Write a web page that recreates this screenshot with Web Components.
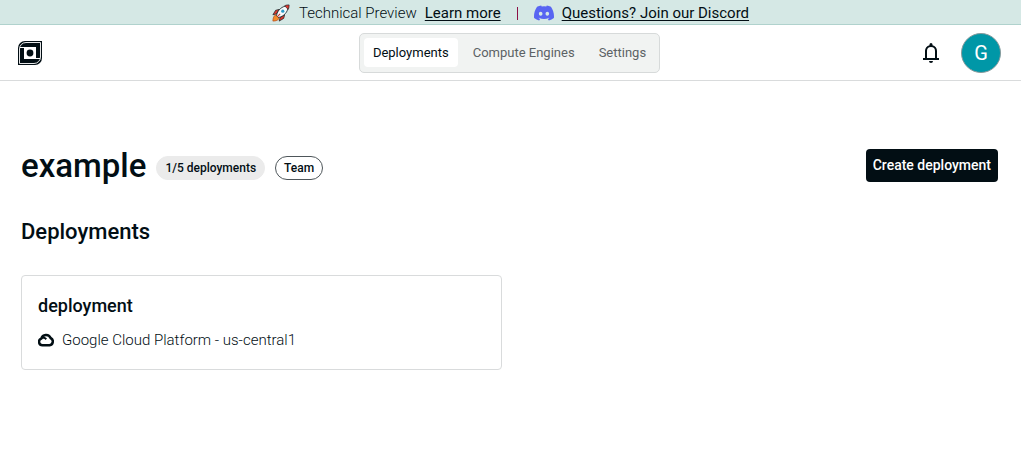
<!DOCTYPE html>
<html lang="en">
<head>
<meta charset="utf-8">
<title>Deployments</title>
<style>
  body { margin: 0; background: #fff; color: #020e14; font-family: Roboto, "Liberation Sans", sans-serif; }
</style>
</head>
<body>
<app-shell></app-shell>
<script>
function define(name, html) {
  const template = document.createElement('template');
  template.innerHTML = '<style>*{box-sizing:border-box}:host{box-sizing:border-box}</style>' + html;
  customElements.define(name, class extends HTMLElement {
    constructor() {
      super();
      this.attachShadow({ mode: 'open' }).append(template.content.cloneNode(true));
    }
  });
}

define('preview-banner', `
<style>
  :host { display: flex; justify-content: center; align-items: center; height: 25px; padding-top: 2px; background: #d5e8e5; border-bottom: 1px solid #b0d2cd; font-size: 15px; line-height: 22px; white-space: nowrap; }
  .rocket { width: 18px; height: 18px; margin-right: 9px; }
  .discord { width: 20px; height: 16px; margin-right: 8px; }
  a { color: inherit; text-decoration-thickness: 1px; text-underline-offset: 2px; }
  .text { font-weight: 300; margin-right: 8px; }
  .bar { width: 1px; height: 13px; background: #8c1046; margin: 0 16px; }
</style>
<svg class="rocket" viewBox="0 0 20 20" aria-hidden="true">
  <path d="M8 6 4 7 1 12 5 11Z" fill="#e0392f" stroke="#142126" stroke-width=".8"/>
  <path d="M14 12 13 16 8 19 9 15Z" fill="#e0392f" stroke="#142126" stroke-width=".8"/>
  <path d="M5 12C2 12 1 16 1 19 4 19 8 18 8 15Z" fill="#f58b28" stroke="#a94018" stroke-width=".7"/>
  <path d="M5 13C6 7 11 2 18 2 18 9 13 14 7 15Z" fill="#f7fbfc" stroke="#142126" stroke-width=".9"/>
  <path d="M14 2C16 1 17 1 19 1 19 3 19 4 18 6Z" fill="#e0392f" stroke="#142126" stroke-width=".7"/>
  <circle cx="12" cy="8" r="1.8" fill="#299bc9"/>
  <path d="m6 14 3-3" stroke="#c9302b" stroke-width="1.2"/>
</svg>
<span class="text">Technical Preview</span><a href="#preview">Learn more</a>
<span class="bar"></span>
<svg class="discord" viewBox="0 0 127.14 96.36" aria-hidden="true"><path fill="#5865f2" d="M107.7 8.07A105.15 105.15 0 0 0 81.47 0a72 72 0 0 0-3.36 6.83 97.68 97.68 0 0 0-29.11 0A72 72 0 0 0 45.64 0a106 106 0 0 0-26.25 8.09C2.79 32.65-1.71 56.6.54 80.21a105.7 105.7 0 0 0 32.17 16.15 77.7 77.7 0 0 0 6.89-11.11 68.4 68.4 0 0 1-10.85-5.18c.91-.66 1.8-1.34 2.66-2a75.57 75.57 0 0 0 64.32 0c.87.71 1.76 1.39 2.66 2a68.7 68.7 0 0 1-10.87 5.19 77 77 0 0 0 6.89 11.1 105.3 105.3 0 0 0 32.19-16.14c2.64-27.38-4.51-51.11-18.9-72.15ZM42.45 65.69C36.18 65.69 31 60 31 53s5-12.74 11.43-12.74S54 46 53.89 53s-5.05 12.69-11.44 12.69Zm42.24 0C78.41 65.69 73.25 60 73.25 53s5-12.74 11.44-12.74S96.23 46 96.12 53s-5.04 12.69-11.43 12.69Z"/></svg>
<a href="#discord">Questions? Join our Discord</a>`);

define('nav-tab', `
<style>
  :host { display: block; }
  a { display: block; height: 29px; padding: 0 9px; border-radius: 4px; font-size: 13px; line-height: 29px; color: #5c6265; text-decoration: none; white-space: nowrap; }
  :host([active]) a { background: #fff; color: #020e14; }
</style>
<a href="#tab"><slot></slot></a>`);

define('app-header', `
<style>
  :host { display: grid; grid-template-columns: 1fr auto 1fr; align-items: center; height: 56px; padding: 0 20px 0 18px; border-bottom: 1px solid #d9dbdc; }
  .logo { display: block; width: 24px; height: 24px; }
  nav { display: flex; gap: 6px; align-items: center; height: 40px; padding: 0 4px; background: #f1f3f2; border: 1px solid #d7dada; border-radius: 5px; }
  .actions { display: flex; justify-content: flex-end; align-items: center; gap: 18px; }
  button { display: grid; place-items: center; padding: 0; border: 0; background: none; color: inherit; font: inherit; }
  .avatar { width: 40px; height: 40px; border: 1px solid #879a9c; border-radius: 50%; background: #0097a7; color: #fff; font-size: 20px; }
</style>
<svg class="logo" viewBox="0 0 24 24" role="img" aria-label="Home">
  <path d="M7 0H24V17a7 7 0 0 1-7 7H0V7a7 7 0 0 1 7-7Z" fill="#020e14"/>
  <path d="M8 1.5H22.5V16a6.5 6.5 0 0 1-6.5 6.5H1.5V8a6.5 6.5 0 0 1 6.5-6.5Z" fill="none" stroke="#fff" stroke-width=".9"/>
  <path d="M2 6.5H7M17 17.5H22" stroke="#fff"/>
  <path d="M6 6h12v12H6z" fill="#fff"/><circle cx="12" cy="12" r="3.4" fill="#020e14"/>
</svg>
<nav><nav-tab active>Deployments</nav-tab><nav-tab>Compute Engines</nav-tab><nav-tab>Settings</nav-tab></nav>
<div class="actions">
  <button aria-label="Notifications"><svg width="24" height="24" viewBox="0 0 24 24"><path fill="#020e14" d="M4 19v-2h2v-7c0-1.38.42-2.61 1.25-3.69A5.9 5.9 0 0 1 10.5 4.2v-.7a1.5 1.5 0 0 1 3 0v.7a5.9 5.9 0 0 1 3.25 2.11A5.9 5.9 0 0 1 18 10v7h2v2H4Zm8 3a2 2 0 0 1-2-2h4a2 2 0 0 1-2 2Zm-4-5h8v-7a4 4 0 0 0-8 0v7Z"/></svg></button>
  <button class="avatar" aria-label="Account">G</button>
</div>`);

define('status-pill', `
<style>
  :host { display: block; height: 24px; padding: 0 8px; border: 1px solid #ebebeb; border-radius: 12px; background: #ebebeb; font-size: 12px; font-weight: 500; line-height: 23px; white-space: nowrap; }
  :host([outlined]) { background: #fff; border-color: #4e565a; }
</style>
<slot></slot>`);

define('deployment-card', `
<style>
  :host { display: block; padding: 17px 16px; border: 1px solid #d9dbdc; border-radius: 4px; }
  h3 { margin: 0; font-size: 18px; font-weight: 500; line-height: 26px; }
  p { display: flex; align-items: center; gap: 8px; margin: 9px 0 0; font-size: 15px; font-weight: 300; line-height: 24px; }
</style>
<h3><slot name="title"></slot></h3>
<p><svg width="16" height="16" viewBox="0 0 16 16" aria-hidden="true">
  <path d="M4.5 13.2a3.4 3.4 0 0 1-1.2-6.6A4.9 4.9 0 0 1 12.6 6a3.8 3.8 0 0 1-1 7.2Z" fill="none" stroke="#020e14" stroke-width="2.5" stroke-linejoin="round"/>
  <path d="M3.5 7.2c2-.8 3.3-.2 4 .9L9 6.5c-.8-1.1-2.4-1.8-4-1.4Z" fill="#020e14"/>
</svg><slot></slot></p>`);

define('project-page', `
<style>
  :host { display: block; padding: 64px 23px 24px 21px; }
  .top { display: flex; align-items: center; justify-content: space-between; height: 41px; }
  .name { display: flex; align-items: center; gap: 10px; }
  h1 { margin: 0; font-size: 33px; font-weight: 500; line-height: 42px; }
  status-pill { margin-top: 4px; }
  button { height: 33px; padding: 0 7px; border: 0; border-radius: 4px; background: #020e14; color: #fff; font: 500 14px/33px Roboto, sans-serif; white-space: nowrap; }
  h2 { margin: 30px 0 0; font-size: 22px; font-weight: 500; line-height: 32px; }
  .cards { display: grid; grid-template-columns: 1fr 1fr; gap: 16px; margin-top: 27px; }
</style>
<div class="top">
  <div class="name"><h1>example</h1><status-pill>1/5 deployments</status-pill><status-pill outlined>Team</status-pill></div>
  <button>Create deployment</button>
</div>
<h2>Deployments</h2>
<div class="cards">
  <deployment-card><span slot="title">deployment</span>Google Cloud Platform - us-central1</deployment-card>
</div>`);

define('app-shell', `
<style>:host { display: block; }</style>
<preview-banner></preview-banner>
<app-header></app-header>
<main><project-page></project-page></main>`);
</script>
</body>
</html>
